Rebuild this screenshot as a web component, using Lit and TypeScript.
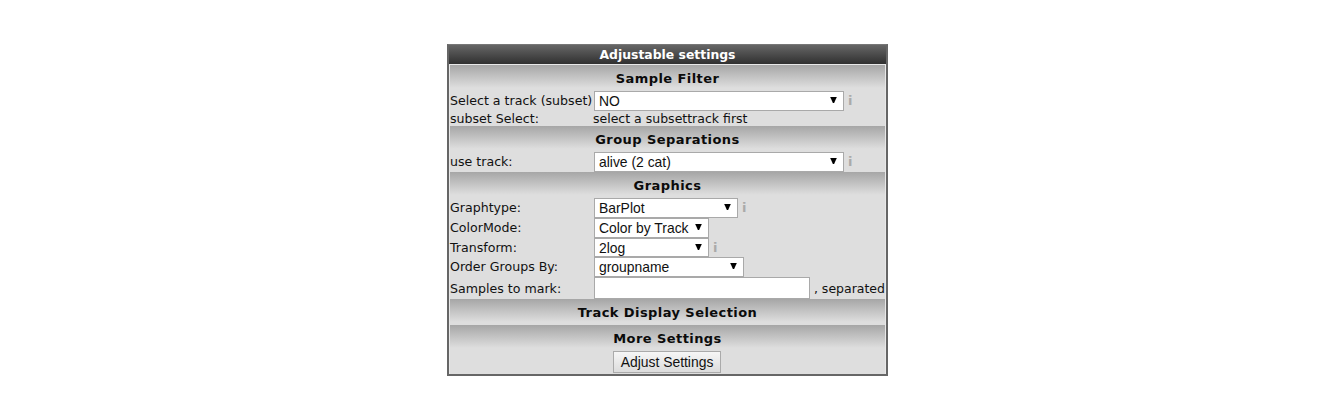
import { LitElement, html, css, nothing } from "lit";
import { customElement } from "lit/decorators.js";

@customElement("app-root")
export class AppRoot extends LitElement {
  static styles = css`
    :host { display: flow-root; height: 404px; background: #fff; color: #111;
      font-family: "DejaVu Sans", Verdana, sans-serif; font-size: 12.6px; }
    * { box-sizing: border-box; }
    .panel { width: 441px; height: 332px; margin: 44px 0 0 447px; border: 1px solid #777; border-width: 1px 2px 2px;
      border-color: #777 #666 #666 #666; background: #dedede; overflow: hidden; }
    .title { height: 19px; background: linear-gradient(#666, #303030); color: #fff;
      font: bold 12.4px/20px "DejaVu Sans", sans-serif; text-align: center; }
    .body { border: 1px solid #e8e8e8; border-bottom: 0; height: 310px; }
    .section { height: 26px; background: linear-gradient(#a6a6a6, #dedede 88%); text-align: center; color: #0b0b0b;
      font: bold 13px/27px "DejaVu Sans", sans-serif; letter-spacing: 0.43px; }
    .row { display: flex; height: 20px; line-height: 20px; white-space: nowrap; }
    .row.note { height: 15px; line-height: 15px; }
    .row.tight { height: 19px; line-height: 19px; }
    .row.entry { height: 22px; line-height: 23px; }
    .label { width: 144px; flex: none; }
    .note .label { width: 143px; }
    .text { font-size: 12.5px; }
    .select { height: 100%; border: 1px solid #a9a9a9; background: #fff; display: flex; justify-content: space-between;
      align-items: center; padding: 0 6px 0 4px; font: 13.9px/18px "Liberation Sans", Arial, sans-serif; }
    .wide { width: 250px; } .graph { width: 144px; } .small { width: 115px; } .order { width: 150px; }
    .arrow { width: 7px; height: 6px; margin-top: -2px; }
    .info { color: #aaa; font-weight: bold; font-size: 13px; margin-left: 4px; }
    .input { width: 216px; height: 22px; border: 1px solid #a9a9a9; background: #fff; margin-right: 4px; }
    .actions { display: flex; justify-content: center; padding-right: 1px; }
    .button { width: 108px; height: 22px; border: 1px solid #aaa; padding: 0; color: #111;
      background: linear-gradient(#f6f6f6, #dcdcdc); font: 13.9px/20px "Liberation Sans", Arial, sans-serif; text-align: center; }
  `;
  private section(name: string) { return html`<div class="section">${name}</div>`; }
  private choice(label: string, value: string, size: string, info = false, row = "") {
    return html`<div class="row ${row}"><span class="label">${label}</span><div class="select ${size}"><span>${value}</span>
      <svg class="arrow" viewBox="0 0 7 6"><path d="M.2 0h6.6L4.1 6H2.9z"/></svg></div>${info ? html`<span class="info">i</span>` : nothing}</div>`;
  }
  render() {
    return html`<div class="panel"><div class="title">Adjustable settings</div><div class="body">
      ${this.section("Sample Filter")}
      ${this.choice("Select a track (subset)", "NO", "wide", true)}
      <div class="row note"><span class="label">subset Select:</span><span class="text">select a subsettrack first</span></div>
      ${this.section("Group Separations")}
      ${this.choice("use track:", "alive (2 cat)", "wide", true)}
      ${this.section("Graphics")}
      ${this.choice("Graphtype:", "BarPlot", "graph", true)}
      ${this.choice("ColorMode:", "Color by Track", "small")}
      ${this.choice("Transform:", "2log", "small", true, "tight")}
      ${this.choice("Order Groups By:", "groupname", "order")}
      <div class="row entry"><span class="label">Samples to mark:</span><div class="input"></div><span class="text">, separated</span></div>
      ${this.section("Track Display Selection")}
      ${this.section("More Settings")}
      <div class="actions"><button class="button">Adjust Settings</button></div>
    </div></div>`;
  }
}
